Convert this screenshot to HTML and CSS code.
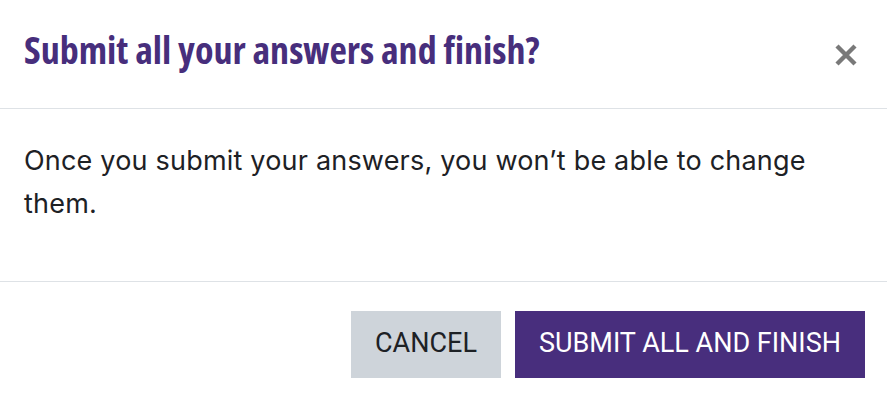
FILE: index.html
```html
<!DOCTYPE html>
<html>
	<head>
		<link rel="stylesheet" href="styles.css">
	</head>
	<body>
		<div class="modal">
			<div class="modal-header">
				<h5 class="modal-title">Submit all your answers and finish?</h5>
				<button type="button" class="close" aria-label="Close">
					<svg width="22" height="22" viewBox="0 0 22 22">
						<path d="M2 2 L20 20 M20 2 L2 20" stroke="currentColor" stroke-width="4.4" fill="none"/>
					</svg>
				</button>
			</div>
			<div class="modal-body">
				<p>Once you submit your answers, you won’t be able to change them.</p>
			</div>
			<div class="modal-footer">
				<button type="button" class="btn btn-secondary">Cancel</button>
				<button type="button" class="btn btn-primary">Submit all and finish</button>
			</div>
		</div>
	</body>
</html>
```
FILE: styles.css
```css
body {
	margin: 0;
	background: #fff;
	font-family: Inter, "Noto Sans", sans-serif;
	color: #1d2125;
}
.modal {
	width: 887px;
	height: 405px;
	background: #fff;
}
.modal-header {
	display: flex;
	align-items: flex-start;
	justify-content: space-between;
	height: 109px;
	box-sizing: border-box;
	padding: 27px 30px 0 24px;
	border-bottom: 1px solid #dee2e6;
}
.modal-title {
	margin: 0;
	font-family: "Open Sans", sans-serif;
	font-stretch: 75%;
	font-weight: 730;
	font-size: 38px;
	line-height: 1.2;
	color: #472e7c;
}
.close {
	margin-top: 17px;
	padding: 0;
	border: 0;
	background: none;
	color: #000;
	opacity: 0.52;
	width: 22px;
	height: 22px;
	line-height: 0;
	cursor: pointer;
}
.modal-body {
	height: 172px;
	box-sizing: border-box;
	padding: 30px 24px 0 24px;
}
.modal-body p {
	margin: 0;
	font-size: 27px;
	line-height: 43px;
	letter-spacing: 0.2px;
}
.modal-footer {
	display: flex;
	justify-content: flex-end;
	gap: 14px;
	border-top: 1px solid #dee2e6;
	padding: 29px 22px 0 0;
}
.btn {
	height: 67px;
	box-sizing: border-box;
	padding: 16px 24px 19px;
	border: 0;
	border-radius: 0;
	font-family: Roboto, sans-serif;
	font-size: 27px;
	line-height: 32px;
	text-transform: uppercase;
	white-space: nowrap;
	cursor: pointer;
}
.btn-secondary {
	background: #ced4da;
	color: #1d2125;
}
.btn-primary {
	background: #482e7d;
	color: #fff;
}
```
